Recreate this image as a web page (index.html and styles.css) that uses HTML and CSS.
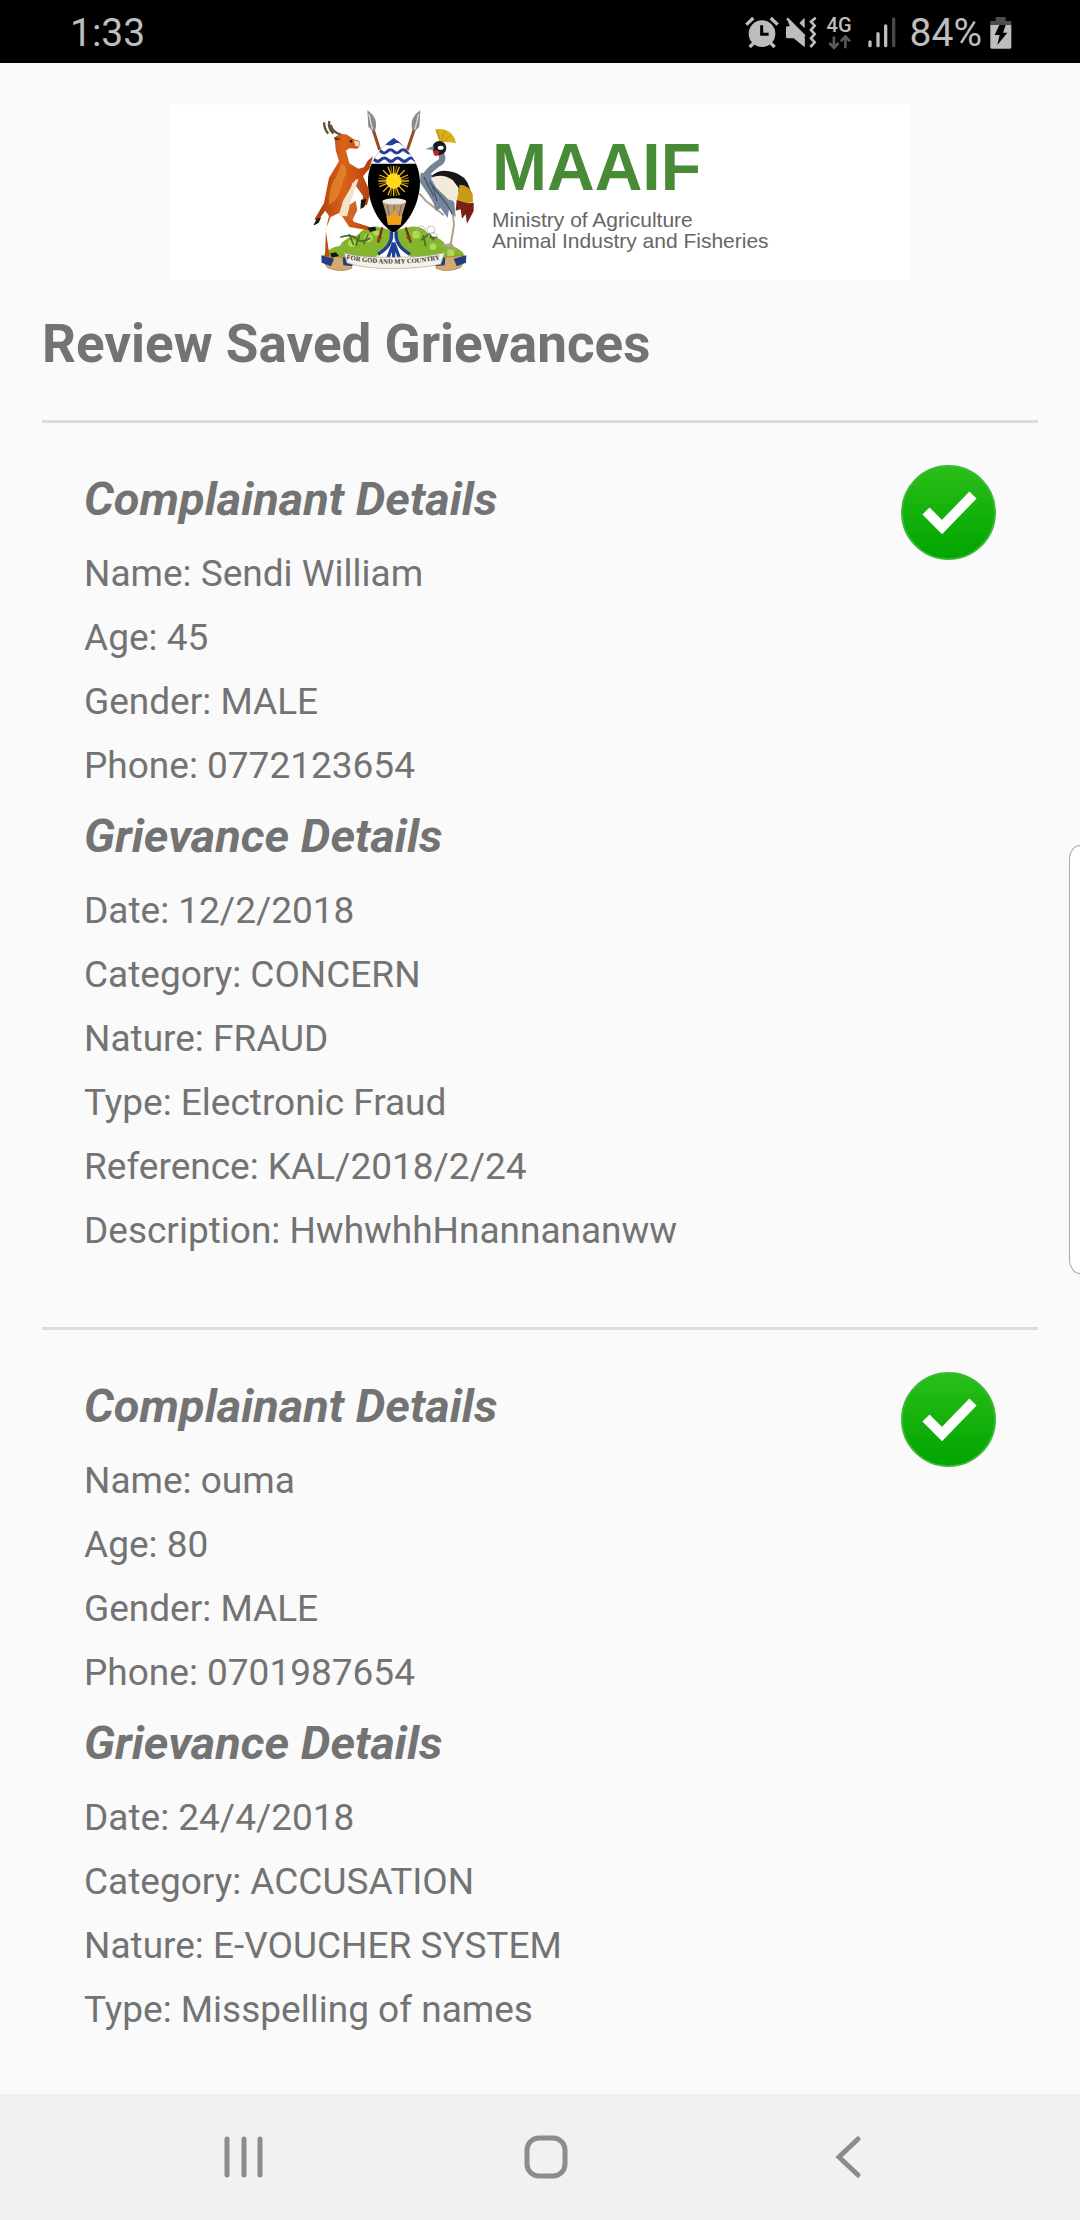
FILE: index.html
```html
<!DOCTYPE html>
<html lang="en">
<head>
<meta charset="utf-8">
<meta name="viewport" content="width=device-width, initial-scale=1">
<title>Review Saved Grievances</title>
<link rel="stylesheet" href="styles.css">
</head>
<body>
<div class="screen">
  <header class="status-bar">
    <span class="clock">1:33</span>
    <div class="status-icons">
      <svg class="icon-alarm" viewBox="66 45 102 102" aria-label="Alarm set">
        <g fill="none" stroke="#bdbdbd" stroke-width="10"><path d="M70 71 91 51M143 51l21 20M94 124l-14 14M141 124l14 14"/></g>
        <circle cx="117" cy="98" r="40" fill="#bdbdbd"/>
        <path d="M116 73v27h21" fill="none" stroke="#000" stroke-width="9"/>
      </svg>
      <svg class="icon-mute" viewBox="186 45 96 102" aria-label="Vibrate">
        <path d="M189 79q0-3 4-3h13l39 39v24l-33-27h-19q-4 0-4-4zM245 50v32l-16-16z" fill="#bdbdbd"/>
        <path d="M192 52l53 54v28l-38-38z" fill="#bdbdbd"/>
        <path d="M192 52l53 53" stroke="#bdbdbd" stroke-width="7"/>
        <path d="M278 50l-14 12 11 12-11 13 11 12-11 13 11 12-13 14" fill="none" stroke="#bdbdbd" stroke-width="8"/>
      </svg>
      <div class="network">
        <span>4G</span>
        <svg class="icon-arrows" viewBox="321 100 70 45" aria-hidden="true">
          <path d="M339 104v32M325 124l14 15 14-15M374 140v-32M360 119l14-15 14 15" fill="none" stroke="#5a5a5a" stroke-width="8"/>
        </svg>
      </div>
      <svg class="icon-signal" viewBox="440 45 84 102" aria-label="Signal">
        <path d="M446 123v11M470 98v36M493 75v59" stroke="#bdbdbd" stroke-width="10" stroke-linecap="round"/>
        <path d="M517 54v80" stroke="#484848" stroke-width="10" stroke-linecap="round"/>
      </svg>
      <span class="percent">84%</span>
      <svg class="icon-battery" viewBox="806 45 66 102" aria-label="Charging">
        <path d="M823 48h30v12h17v14h-63V60h16z" fill="#4c4c4c"/>
        <path d="M807 72h63v67q0 4-4 4h-55q-4 0-4-4z" fill="#bdbdbd"/>
        <path d="M834 72h19l-8 23h13l-30 37 7-30h-15z" fill="#000"/>
      </svg>
    </div>
  </header>

  <main class="content">
    <div class="brand">
      <svg class="crest" viewBox="0 15 570 525" role="img" aria-label="Coat of arms of Uganda">
        <defs>
          <linearGradient id="kob" x1="0" x2="1"><stop offset="0" stop-color="#a93808"/><stop offset=".5" stop-color="#d9631a"/><stop offset="1" stop-color="#b53c0c"/></linearGradient>
          <clipPath id="shield"><path d="M281 114C245 141 205 182 204 242C202 310 238 375 281 397C324 375 361 310 360 242C358 182 318 141 281 114z"/></clipPath>
        </defs>
        <path d="M218 85l21 65M344 85l-22 65" stroke="#984b26" stroke-width="9"/>
        <path d="M202 31q34 22 24 59l-8 4-13-14zM361 31q-34 22-24 59l8 4 13-14z" fill="#888b8d"/>
        <path d="M207 42l10 46M356 42l-11 46" stroke="#d9dcdc" stroke-width="4"/>
        <path d="M66 475q14-32 54-38 16-27 52-31 20-28 61-26l48 12 51-12q41-3 56 28 38 4 49 28 49 3 60 39l-51 15H110z" fill="#83b52d"/>
        <g fill="#b3d756"><circle cx="155" cy="430" r="11"/><circle cx="205" cy="414" r="13"/><circle cx="228" cy="398" r="9"/><circle cx="349" cy="404" r="12"/><circle cx="399" cy="440" r="10"/><circle cx="452" cy="459" r="11"/><circle cx="101" cy="468" r="9"/></g>
        <g fill="none" stroke="#486e25" stroke-width="5"><path d="M121 412q31-12 48 4t42-2M147 402l14 33M179 405l-11 32M205 402l-14 30M363 421l25-20 15 22M377 439l-7-33M389 413l23 0"/></g>
        <path d="M247 382l-12 45M317 382l15 45" stroke="#743116" stroke-width="7"/><path d="M230 430l4-21 13 3zM336 430l-5-21-13 3z" fill="#8e3b20"/>
        <path d="M281 383l13 49 38 38-51 17-53-17 39-38z" fill="#fff"/>
        <path d="M274 394q7 41-40 69M289 394q-7 41 41 69M281 428l-17 45M281 428l17 45M281 432v42" fill="none" stroke="#213e91" stroke-width="10"/>
        <path d="M74 466q-8 17 8 37 40 16 73 2l-6-30zM488 466q9 17-7 37-41 16-73 2l6-30z" fill="#d6aa6c" stroke="#92724a" stroke-width="2"/>
        <path d="M64 466l38 10-9 23-28-11zM128 474l25-7 5 32-28-3zM499 466l-38 10 9 23 28-11zM436 474l-26-7-4 32 28-3z" fill="#213e82"/>
        <path d="M133 459q35 10 76 12 72 2 144-1 44-3 81-12l-12 35q-62 12-141 13t-140-17z" fill="#f5f1e7" stroke="#aaa28e" stroke-width="2"/>
        <path id="motto" d="M139 477q142 28 290 0" fill="none"/>
        <text class="motto"><textPath href="#motto">FOR GOD AND MY COUNTRY</textPath></text>

        <g clip-path="url(#shield)">
          <path d="M200 100h165v300H200z" fill="#000"/>
          <path d="M200 100h165v91H200z" fill="#fff"/>
          <g fill="none" stroke="#253e9b" stroke-width="9"><path d="M242 127q10-9 20 0t20 0 20 0 20 0M224 154q9-10 19 0t19 0 19 0 19 0 19 0 19 0M203 179q10-10 20 0t20 0 20 0 20 0 20 0 20 0 20 0 20 0"/></g>
          <path d="M248 132l33-20 33 20q-17-8-33 0t-33 0z" fill="#253e9b"/>
        </g>
        <g stroke="#e7b914" stroke-width="4"><path d="M281 197v91M235 243h92M249 211l65 64M314 211l-65 64M264 200l34 86M298 200l-34 86M238 225l86 35M238 260l86-35"/><path d="M272 197l18 91M290 197l-18 91M235 234l91 18M235 252l91-18" stroke-width="2"/></g>
        <circle cx="281" cy="243" r="23" fill="#ffd91a"/>
        <path d="M247 304l13 43 4 27h38l4-27 13-43z" fill="#b79a77"/><ellipse cx="283" cy="304" rx="36" ry="9" fill="#eee9df"/><path d="M262 315l6 36M283 315v32M304 315l-7 36" stroke="#806247" stroke-width="3"/><path d="M259 348l17-3 8-16 8 18 15 1-5 26h-38z" fill="#efa01c"/>

        <path d="M85 101q-12-12-13-34M100 101Q83 85 88 63M124 104Q98 98 92 74" fill="none" stroke="#61513a" stroke-width="7"/>
        <path d="M104 113q14-15 37-9l19 13 18 6 3 15-9 8-24-1-10 7 10 38 27 16 17-4 11-20 16-13-11 37-19 23 15 33 4 26-7 28-14-1 2-27-30-43-14 42-5 34 21 44 48 16-3 10-58-10-29-43-27 13-15 37 12 82h-14L78 386l9-38-11-16-24 32-8-7 28-48 15-76 30-49-10-34z" fill="url(#kob)"/>
        <path d="M124 190q-11 38-26 58-12 25-11 65 29-8 43-74 21-31-6-49z" fill="#e6892f" opacity=".75"/>
        <path d="M166 239l10-2-9 24-18 55-7 33-26-2 13-44z" fill="#f4e2ca"/>
        <path d="M149 314l18-12 5 28-16 33-13-14z" fill="#cb6824"/>
        <path d="M109 121q-8-3-6-10l21 6" fill="#742c13"/><circle cx="153" cy="124" r="4" fill="#201713"/>
        <path d="M161 121l16 4 3 16-14-3z" fill="#efdabf"/>
        <path d="M41 374l9-17 14-5-8 16-13 8zM183 299l16-3-6 25-12 6zM203 383l22-3 5 11-20 5zM91 460l17-3 9 11-22 5z" fill="#181717"/>

        <g fill="none" stroke="#aaa9a5" stroke-width="2"><circle cx="363" cy="391" r="13"/><circle cx="393" cy="390" r="12"/><circle cx="399" cy="410" r="13"/></g>
        <path d="M358 280l20 23 54 43M457 327l5 47-10 61M452 432l-25 5M452 431l14 20M452 433l-10 18" fill="none" stroke="#b2a08b" stroke-width="6"/>
        <path d="M405 88q31-4 47 11 13 12 16 31-28-6-49-3z" fill="#d9ae1b"/><path d="M420 121l-8-29M425 121l10-29M433 122l19-17" stroke="#ac830c" stroke-width="2"/>
        <path d="M420 158q16 22-6 33-30 20-43 46" fill="none" stroke="#748393" stroke-width="19"/>
        <circle cx="418" cy="144" r="21" fill="#17191e"/><path d="M401 138l-25 9 25 4z" fill="#6a99a5"/><ellipse cx="422" cy="143" rx="9" ry="6" fill="#fff"/><path d="M401 151q17-2 17 8l-8 10q-14-4-9-18z" fill="#c91e2c"/>
        <path d="M362 218l31 4 34 28 36 59 4 43-20-25-4 27-21-30-14 10-8-26-14-23-26-38z" fill="#76879a"/>
        <path d="M395 228q25-24 66-11 36 10 47 44l6 20-39-5-46-27z" fill="#17171b"/>
        <path d="M392 234q34-16 66 6l18 24-3 40-26-4-38-37z" fill="#f3ead9"/>
        <path d="M479 254q30 2 39 28l1 23-14 5-34-9z" fill="#c79a18"/>
        <path d="M470 300l35 10 16-2v25l-20 38-4-29-11 14-4-28-15 4z" fill="#7b2019"/>
        <path d="M389 246l53 69 15 28M398 259l13 45M372 231l29 57" fill="none" stroke="#455668" stroke-width="4"/>
      </svg>
      <div class="brand-text">
        <strong>MAAIF</strong>
        <p>Ministry of Agriculture<br>Animal Industry and Fisheries</p>
      </div>
    </div>

    <h1>Review Saved Grievances</h1>

    <article class="grievance">
      <div class="details">
        <h2>Complainant Details</h2>
        <p>Name: Sendi William</p>
        <p>Age: 45</p>
        <p>Gender: MALE</p>
        <p>Phone: 0772123654</p>
        <h2>Grievance Details</h2>
        <p>Date: 12/2/2018</p>
        <p>Category: CONCERN</p>
        <p>Nature: FRAUD</p>
        <p>Type: Electronic Fraud</p>
        <p>Reference: KAL/2018/2/24</p>
        <p>Description: HwhwhhHnannananww</p>
      </div>
      <svg class="check" viewBox="0 0 95 95" role="img" aria-label="Saved">
        <defs><linearGradient id="green" x2="0" y2="1"><stop offset="0" stop-color="#2abf18"/><stop offset="1" stop-color="#00a400"/></linearGradient></defs>
        <circle cx="47.500" cy="47.500" r="46.500" fill="url(#green)" stroke="#39b936" stroke-width="2"/>
        <path d="M25 46l16 16 31-32" fill="none" stroke="#fff" stroke-width="10"/>
      </svg>
    </article>

    <article class="grievance">
      <div class="details">
        <h2>Complainant Details</h2>
        <p>Name: ouma</p>
        <p>Age: 80</p>
        <p>Gender: MALE</p>
        <p>Phone: 0701987654</p>
        <h2>Grievance Details</h2>
        <p>Date: 24/4/2018</p>
        <p>Category: ACCUSATION</p>
        <p>Nature: E-VOUCHER SYSTEM</p>
        <p>Type: Misspelling of names</p>
      </div>
      <svg class="check" viewBox="0 0 95 95" role="img" aria-label="Saved">
        <circle cx="47.500" cy="47.500" r="46.500" fill="url(#green)" stroke="#39b936" stroke-width="2"/>
        <path d="M25 46l16 16 31-32" fill="none" stroke="#fff" stroke-width="10"/>
      </svg>
    </article>
  </main>

  <nav class="nav-bar">
    <button type="button" aria-label="Recent apps"><svg viewBox="0 0 44 44"><path d="M5 4v36M22 4v36M38 4v36" stroke-linecap="round"/></svg></button>
    <button type="button" aria-label="Home"><svg viewBox="0 0 44 44"><rect x="3" y="3" width="38" height="38" rx="12"/></svg></button>
    <button type="button" aria-label="Back"><svg viewBox="0 0 44 44"><path d="M32 4 13 22l19 18" stroke-linecap="round"/></svg></button>
  </nav>
</div>
<div class="edge-handle"></div>
</body>
</html>
```
FILE: styles.css
```css
* { box-sizing: border-box; }

body {
  margin: 0;
  background: #fafafa;
  color: #737373;
  font-family: Roboto, sans-serif;
}

h1, h2, p { margin: 0; }
svg { display: block; }

.screen {
  display: flex;
  flex-direction: column;
  min-height: 100vh;
}

.status-bar {
  display: flex;
  align-items: center;
  justify-content: space-between;
  height: 63px;
  padding: 2px 68px 0 70px;
  background: #000;
  color: #bdbdbd;
  font-size: 39px;
}

.status-icons { display: flex; align-items: center; }
.status-icons svg { height: 34px; }
.status-icons .icon-alarm { width: 34px; margin-right: 6px; }
.status-icons .icon-mute { width: 32px; margin-right: 10px; }
.network {
  display: flex;
  flex-direction: column;
  align-items: center;
  margin-right: 16px;
  font-size: 20px;
  font-weight: 500;
  line-height: 20px;
}
.status-icons .icon-arrows { width: 23px; height: 15px; }
.status-icons .icon-signal { width: 28px; margin-right: 14px; }
.percent { margin-right: 8px; }
.status-icons .icon-battery { width: 22px; }

.content {
  flex: 1;
  padding: 42px 42px 0;
}

.brand {
  display: flex;
  max-width: 740px;
  height: 175px;
  margin: 0 auto;
  padding-left: 130px;
  background: #fff;
}
.crest { width: 190px; height: 175px; flex: none; }
.motto { font: bold 20px "Liberation Serif", serif; fill: #333; }
.brand-text {
  padding: 24px 0 0 2px;
  color: #666;
  font-family: "Liberation Sans", Arial, sans-serif;
}
.brand-text strong {
  display: block;
  margin-bottom: 4px;
  color: #478b36;
  font-size: 66px;
  line-height: 76px;
}
.brand-text p { font-size: 21px; line-height: 21px; white-space: nowrap; }

h1 {
  padding: 33px 0 45px;
  font-size: 53px;
  font-weight: 700;
  line-height: 62px;
}

.grievance {
  display: flex;
  justify-content: space-between;
  align-items: flex-start;
  padding: 38px 42px 64px;
  border-top: 3px solid #dcdcdc;
}
.details { min-width: 0; overflow-wrap: anywhere; }
.details h2 {
  margin-bottom: 5px;
  font-size: 47px;
  font-style: italic;
  font-weight: 700;
  line-height: 76px;
}
.details p { font-size: 37px; line-height: 64px; }
.grievance:last-child { padding-bottom: 0; }
.check { flex: none; width: 95px; height: 95px; margin-top: 4px; }

.nav-bar {
  display: grid;
  grid-template-columns: repeat(3, 1fr);
  height: 126px;
  padding: 0 81px 0 93px;
  background: #f1f1f1;
}
.nav-bar button {
  display: grid;
  place-items: center;
  padding: 0;
  border: 0;
  background: none;
}
.nav-bar svg {
  width: 44px;
  height: 44px;
  fill: none;
  stroke: #8c8c8c;
  stroke-width: 5px;
}

.edge-handle {
  position: fixed;
  top: 845px;
  right: 0;
  width: 11px;
  height: 429px;
  border: 1px solid #aaa;
  border-right: 0;
  border-radius: 12px 0 0 12px / 16px 0 0 16px;
  background: #fff;
}
```
